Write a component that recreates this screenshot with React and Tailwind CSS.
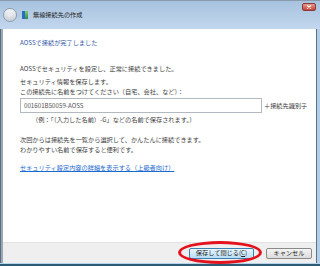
import React from "react";

const font = { fontFamily: '"Noto Sans CJK JP", "Noto Sans", sans-serif' };

export default function App() {
  return (
    <div
      className="relative w-[320px] h-[266px] overflow-hidden flex flex-col bg-[#bcd3ec] text-[6.2px] leading-[10px] text-[#404040]"
      style={font}
    >
      {/* Title bar */}
      <div className="h-[29px] flex items-center border-t border-[#8a9bb0] bg-gradient-to-b from-[#a8c2de] to-[#c2d7ee] relative">
        <div className="ml-[3px] w-[14px] h-[14px] rounded-full border border-[#8e99a6] bg-gradient-to-b from-[#f4f6f8] to-[#c9d0d8] flex items-center justify-center">
          <svg width="8" height="8" viewBox="0 0 8 8">
            <path d="M6.5 4H2M4 2L2 4l2 2" stroke="#e8ecf0" strokeWidth="1.3" fill="none" />
          </svg>
        </div>
        <div className="ml-[5px] w-[6px] h-[8px] flex">
          <div className="w-[3px] h-full bg-[#2a6cc8]" />
          <div className="w-[3px] h-full bg-gradient-to-b from-[#7fd06a] to-[#2f8a4a]" />
        </div>
        <span className="ml-[5px] text-[#222]">無線接続先の作成</span>
        <div className="absolute right-[4px] top-[2px] w-[14px] h-[8px] rounded-[2px] border border-[#8a3a3a] bg-gradient-to-b from-[#e49a8a] to-[#c5433a] flex items-center justify-center">
          <svg width="6" height="4" viewBox="0 0 6 4">
            <path d="M1 0.5L5 3.5M5 0.5L1 3.5" stroke="#fff" strokeWidth="1.1" />
          </svg>
        </div>
      </div>

      {/* Middle */}
      <div className="flex h-[234px]">
        <div className="w-[3px] border-l border-[#5e6c7a] bg-[#9aa7b4]" />
        <div className="flex-1 flex flex-col">
          <div className="flex-1 bg-white pl-[17px] pt-[9px] flex flex-col">
            <div className="text-[#3456a8]">AOSSで接続が完了しました</div>
            <div className="mt-[16px]">AOSSでセキュリティを設定し、正常に接続できました。</div>
            <div className="mt-[3px]">セキュリティ情報を保存します。</div>
            <div>この接続先に名前をつけてください（自宅、会社、など）：</div>
            <div className="flex items-center mt-[1px]">
              <div className="w-[242px] h-[15px] border border-[#b3b9c1] flex items-center pl-[3px] text-[#555]">
                001601B50059-AOSS
              </div>
              <span className="ml-[2px]">＋接続先識別子</span>
            </div>
            <div className="mt-[2px] pl-[12px]">（例：「（入力した名前）-G」などの名前で保存されます。）</div>
            <div className="mt-[10px]">次回からは接続先を一覧から選択して、かんたんに接続できます。</div>
            <div>わかりやすい名前で保存すると便利です。</div>
            <div className="mt-[8px] text-[#1a6ad0] underline">
              セキュリティ設定内容の詳細を表示する（上級者向け）
            </div>
          </div>
          <div className="h-[21px] bg-[#efefef] border-t border-[#e2e2e2] flex items-center justify-end pr-[4px] gap-[12px]">
            <div className="w-[65px] h-[11px] rounded-[2px] border border-[#3c7fb1] bg-gradient-to-b from-[#eaf6fd] to-[#b7def6] flex items-center justify-center leading-none text-[#222]">
              保存して閉じる(<span className="underline">C</span>)
            </div>
            <div className="w-[46px] h-[11px] rounded-[2px] border border-[#8a8a8a] bg-gradient-to-b from-[#f4f4f4] to-[#dcdcdc] flex items-center justify-center leading-none text-[#222]">
              キャンセル
            </div>
          </div>
        </div>
        <div className="w-[4px] border-l border-[#4f7591] bg-[#b6cde6]" />
      </div>

      {/* Bottom frame */}
      <div className="h-[3px] border-t border-[#b6d4ea] bg-[#2d5a75]" />

      {/* Annotation ellipse */}
      <div className="absolute left-[178px] top-[241px] w-[84px] h-[23px] rounded-[50%] border-[3px] border-[#e4121c]" />
    </div>
  );
}
